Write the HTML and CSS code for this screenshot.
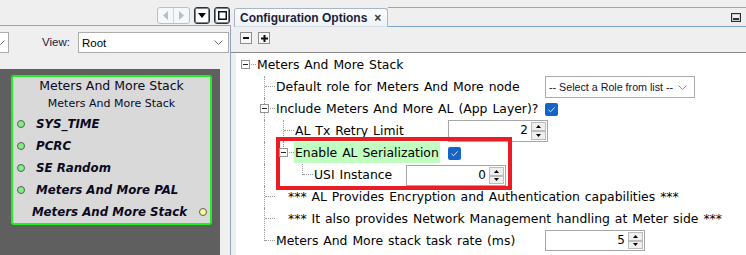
FILE: index.html
```html
<!DOCTYPE html>
<html lang="en">
<head>
  <meta charset="UTF-8">
  <title>Configuration Options</title>
  <link rel="stylesheet" href="styles.css">
</head>
<body>
<div class="app">

  <!-- Project graph panel -->
  <section class="left">
    <div class="left-head">
      <div class="nav-arrows">
        <span class="arr"><svg width="5" height="9" viewBox="0 0 5 9"><path d="M5 0 L0 4.5 L5 9 Z" fill="#b7bec6"/></svg></span>
        <span class="arr"><svg width="5" height="9" viewBox="0 0 5 9"><path d="M0 0 L5 4.5 L0 9 Z" fill="#b7bec6"/></svg></span>
      </div>
      <span class="win-btn"><svg width="8" height="5" viewBox="0 0 8 5"><path d="M0 0 H8 L4 5 Z" fill="#000"/></svg></span>
      <span class="win-btn"><svg width="9" height="9" viewBox="0 0 9 9"><rect x="0.75" y="0.75" width="7.5" height="7.5" fill="none" stroke="#111" stroke-width="1.5"/></svg></span>
    </div>
    <div class="left-body">
      <div class="view-bar">
        <div class="combo combo-stub">
          <svg width="9" height="5" viewBox="0 0 9 5"><path d="M0.5 0.5 L4.5 4.5 L8.5 0.5" fill="none" stroke="#707070"/></svg>
        </div>
        <span class="view-label">View:</span>
        <div class="combo combo-view">
          <span>Root</span>
          <svg width="9" height="5" viewBox="0 0 9 5"><path d="M0.5 0.5 L4.5 4.5 L8.5 0.5" fill="none" stroke="#707070"/></svg>
        </div>
      </div>
      <div class="canvas-wrap">
        <div class="canvas">
          <div class="node">
            <div class="node-title">Meters And More Stack</div>
            <div class="node-sub">Meters And More Stack</div>
            <div class="dep"><span class="dot green"></span>SYS_TIME</div>
            <div class="dep"><span class="dot green"></span>PCRC</div>
            <div class="dep"><span class="dot green"></span>SE Random</div>
            <div class="dep"><span class="dot green"></span>Meters And More PAL</div>
            <div class="dep cap">Meters And More Stack<span class="dot yellow"></span></div>
          </div>
        </div>
        <div class="gutter"></div>
      </div>
    </div>
  </section>

  <!-- Configuration options panel -->
  <section class="right">
    <div class="tabs">
      <div class="tab">Configuration Options <span class="tab-close">&times;</span></div>
      <div class="tab-rest"><span class="min-btn"></span></div>
    </div>
    <div class="tree-tools">
      <span class="tool-btn"><svg width="6" height="2" viewBox="0 0 6 2"><rect width="6" height="2" fill="#111"/></svg></span>
      <span class="tool-btn"><svg width="7" height="7" viewBox="0 0 7 7"><rect y="2.5" width="7" height="2" fill="#111"/><rect x="2.5" width="2" height="7" fill="#111"/></svg></span>
    </div>

    <div class="tree">
      <div class="row">
        <span class="cell h"><span class="exp"></span></span>
        <span class="label">Meters And More Stack</span>
      </div>

      <div class="row">
        <span class="cell"></span>
        <span class="cell v h"></span>
        <span class="label lbl-l">Default role for Meters And More node</span>
        <div class="combo combo-role">
          <span>-- Select a Role from list --</span>
          <svg width="9" height="5" viewBox="0 0 9 5"><path d="M0.5 0.5 L4.5 4.5 L8.5 0.5" fill="none" stroke="#8a8a8a"/></svg>
        </div>
      </div>

      <div class="row">
        <span class="cell"></span>
        <span class="cell v h"><span class="exp"></span></span>
        <span class="label lbl-l">Include Meters And More AL (App Layer)?</span>
        <svg class="check" width="13" height="13" viewBox="0 0 13 13"><rect width="13" height="13" rx="2" fill="#1565c8"/><path d="M3.5 6.8 L5.6 8.8 L9.6 4.4" fill="none" stroke="#d6e6fa" stroke-width="1"/></svg>
      </div>

      <div class="row">
        <span class="cell"></span>
        <span class="cell v"></span>
        <span class="cell v h"></span>
        <span class="label lbl-m">AL Tx Retry Limit</span>
        <div class="spinner">
          <span class="val">2</span>
          <span class="spin-btns">
            <span><svg width="5" height="3" viewBox="0 0 5 3"><path d="M0 3 L2.5 0 L5 3 Z" fill="#000"/></svg></span>
            <span><svg width="5" height="3" viewBox="0 0 5 3"><path d="M0 0 L5 0 L2.5 3 Z" fill="#000"/></svg></span>
          </span>
        </div>
      </div>

      <div class="row">
        <span class="cell"></span>
        <span class="cell v"></span>
        <span class="cell l h"><span class="exp"></span></span>
        <span class="label lbl-m"><span class="hl">Enable AL Serialization</span></span>
        <svg class="check" width="13" height="13" viewBox="0 0 13 13"><rect width="13" height="13" rx="2" fill="#1565c8"/><path d="M3.5 6.8 L5.6 8.8 L9.6 4.4" fill="none" stroke="#d6e6fa" stroke-width="1"/></svg>
      </div>

      <div class="row">
        <span class="cell"></span>
        <span class="cell v"></span>
        <span class="cell"></span>
        <span class="cell l h"></span>
        <span class="label lbl-s">USI Instance</span>
        <div class="spinner short">
          <span class="val">0</span>
          <span class="spin-btns">
            <span><svg width="5" height="3" viewBox="0 0 5 3"><path d="M0 3 L2.5 0 L5 3 Z" fill="#000"/></svg></span>
            <span><svg width="5" height="3" viewBox="0 0 5 3"><path d="M0 0 L5 0 L2.5 3 Z" fill="#000"/></svg></span>
          </span>
        </div>
      </div>

      <div class="row">
        <span class="cell"></span>
        <span class="cell v h"></span>
        <span class="label note">*** AL Provides Encryption and Authentication capabilities ***</span>
      </div>

      <div class="row">
        <span class="cell"></span>
        <span class="cell v h"></span>
        <span class="label note">*** It also provides Network Management handling at Meter side ***</span>
      </div>

      <div class="row">
        <span class="cell"></span>
        <span class="cell l h"></span>
        <span class="label lbl-l">Meters And More stack task rate (ms)</span>
        <div class="spinner flat">
          <span class="val">5</span>
          <span class="spin-btns">
            <span><svg width="5" height="3" viewBox="0 0 5 3"><path d="M0 3 L2.5 0 L5 3 Z" fill="#000"/></svg></span>
            <span><svg width="5" height="3" viewBox="0 0 5 3"><path d="M0 0 L5 0 L2.5 3 Z" fill="#000"/></svg></span>
          </span>
        </div>
      </div>

      <!-- annotation frame -->
      <div class="mark-box"></div>
    </div>
  </section>

</div>
</body>
</html>
```

FILE: styles.css
```css
* {
  box-sizing: border-box;
}

html, body {
  margin: 0;
  padding: 0;
}

body {
  width: 746px;
  height: 255px;
  overflow: hidden;
  background: #efefef;
  font-family: "DejaVu Sans", sans-serif;
  font-size: 12px;
  color: #000;
}

.app {
  display: flex;
  height: 255px;
}

svg {
  display: block;
}

/* Left panel */
.left {
  width: 231px;
  flex: none;
  display: flex;
  flex-direction: column;
}

.left-head {
  height: 25px;
  display: flex;
  justify-content: flex-end;
  align-items: flex-start;
  gap: 4px;
  padding: 7px 1px 0 0;
}

.nav-arrows {
  width: 33px;
  height: 17px;
  border: 1px solid #b3c0cd;
  border-radius: 3px;
  background: #f6f7f9;
  display: flex;
}

.nav-arrows .arr {
  flex: 1;
  display: flex;
  align-items: center;
  justify-content: center;
}

.nav-arrows .arr + .arr {
  border-left: 1px solid #cdd5dd;
}

.win-btn {
  width: 16px;
  height: 17px;
  border: 1px solid #2b3036;
  box-shadow: inset 0 0 0 1px #7a838c;
  border-radius: 3px;
  background: #fff;
  display: flex;
  align-items: center;
  justify-content: center;
}

.left-body {
  flex: 1;
  display: flex;
  flex-direction: column;
  border-top: 1px solid #8fa4b8;
  border-right: 1px solid #8fa4b8;
}

.view-bar {
  height: 43px;
  display: flex;
  align-items: flex-start;
  padding-top: 6px;
  font-family: "Liberation Sans", sans-serif;
  font-size: 11.5px;
}

.combo {
  height: 21px;
  border: 1px solid #acacac;
  background: #fff;
  display: flex;
  align-items: center;
}

.combo-stub {
  width: 9px;
  border-left: none;
  justify-content: flex-end;
  overflow: hidden;
  padding-right: 3px;
}

.combo-stub svg {
  flex: none;
}

.view-label {
  margin-left: 33px;
  line-height: 21px;
  color: #1a1a3a;
}

.combo-view {
  width: 151px;
  margin-left: auto;
  margin-right: 1px;
  justify-content: space-between;
  padding: 0 5px 0 3px;
}

.canvas-wrap {
  flex: 1;
  display: flex;
}

.canvas {
  width: 220px;
  background: #5f5f5f;
  padding: 6px 0 0 11px;
}

.gutter {
  flex: 1;
  background: #efefef;
}

.node {
  width: 201px;
  height: 150px;
  background: #d9d9d9;
  border: 2px solid #22ee22;
  border-radius: 3px;
  color: #0a0a1e;
}

.node-title {
  text-align: center;
  font-size: 12.5px;
  line-height: 17px;
}

.node-sub {
  text-align: center;
  font-size: 11px;
  line-height: 19px;
}

.dep {
  display: flex;
  align-items: center;
  gap: 11px;
  height: 22px;
  padding-left: 4px;
  font-weight: bold;
  font-style: italic;
  font-size: 11.8px;
}

.dep.cap {
  justify-content: flex-end;
  gap: 12px;
  padding-right: 3px;
}

.dot {
  width: 8px;
  height: 8px;
  border-radius: 50%;
  border: 1px solid #55605a;
  flex: none;
}

.dot.green {
  background: #80f080;
}

.dot.yellow {
  background: #fff890;
}

/* Right panel */
.right {
  flex: 1;
  display: flex;
  flex-direction: column;
}

.tabs {
  height: 27px;
  display: flex;
  align-items: flex-end;
  padding-left: 3px;
}

.tab {
  height: 19px;
  display: flex;
  align-items: center;
  gap: 7px;
  padding: 0 6px 0 5px;
  border: 1px solid #a9b6c4;
  border-bottom-color: #d3dde7;
  border-radius: 3px 3px 0 0;
  background: linear-gradient(#fbfcfe, #eef3f8);
  font-family: "Liberation Sans", sans-serif;
  font-weight: bold;
  font-size: 12px;
  color: #1c1c38;
}

.tab-close {
  font-size: 12px;
  color: #333;
}

.tab-rest {
  flex: 1;
  height: 20px;
  border-top: 1px solid #9aa6b1;
  border-bottom: 1px solid #7ea5ca;
  display: flex;
  justify-content: flex-end;
  align-items: center;
  padding-right: 5px;
}

.min-btn {
  width: 10px;
  height: 9px;
  border: 1px solid #2b2b2b;
  box-shadow: inset 0 0 0 1px #d0d0d0;
  background: linear-gradient(transparent 4px, #333 4px, #333 6px, transparent 6px);
}

.tree-tools {
  height: 26px;
  display: flex;
  align-items: flex-start;
  gap: 6px;
  padding: 5px 0 0 9px;
  border-bottom: 1px solid #8b8b8b;
}

.tool-btn {
  width: 12px;
  height: 12px;
  border: 1px solid #8e8e8e;
  background: #f7f7f7;
  display: flex;
  align-items: center;
  justify-content: center;
}

/* Tree */
.tree {
  flex: 1;
  position: relative;
  margin-left: 5px;
  padding-top: 1px;
  background: #fff;
  font-size: 12.4px;
  word-spacing: 1px;
}

.row {
  display: flex;
  align-items: flex-start;
  height: 22px;
}

.cell {
  position: relative;
  width: 19px;
  height: 22px;
  flex: none;
}

.cell.v::before,
.cell.l::before {
  content: "";
  position: absolute;
  left: 9px;
  top: 0;
  height: 22px;
  border-left: 1px dotted #9a9a9a;
}

.cell.l::before {
  height: 11px;
}

.cell.h::after {
  content: "";
  position: absolute;
  left: 10px;
  width: 10px;
  top: 10px;
  border-top: 1px dotted #9a9a9a;
}

.exp {
  position: absolute;
  left: 5px;
  top: 6px;
  width: 9px;
  height: 9px;
  border: 1px solid #949494;
  background: #fff;
  z-index: 1;
}

.exp::after {
  content: "";
  position: absolute;
  left: 1px;
  top: 3px;
  width: 5px;
  height: 1px;
  background: #222;
}

.label {
  padding-left: 2px;
  line-height: 22px;
  white-space: nowrap;
  flex: none;
}

.label.note {
  padding-left: 14px;
}

.lbl-l {
  width: 271px;
}

.lbl-m {
  width: 155px;
}

.lbl-s {
  width: 94px;
}

.hl {
  display: inline-block;
  background: #c0ffc0;
  line-height: 21px;
  margin-left: -1px;
  padding: 0 1px;
}

.combo-role {
  width: 150px;
  height: 22px;
  justify-content: space-between;
  padding: 0 7px 0 3px;
  font-family: "Liberation Sans", sans-serif;
  font-size: 10.7px;
  word-spacing: 0;
  white-space: nowrap;
  color: #10103c;
}

.combo-role svg {
  flex: none;
}

.check {
  margin-top: 5px;
}

.spinner {
  width: 100px;
  height: 22px;
  border: 1px solid #a6a6a6;
  background: #fff;
  display: flex;
  font-size: 12px;
}

.spinner.short {
  height: 21px;
  margin-top: 1px;
}

.spinner.flat {
  height: 21px;
}

.spinner .val {
  flex: 1;
  text-align: right;
  padding-right: 3px;
  line-height: 19px;
}

.spin-btns {
  width: 16px;
  display: flex;
  flex-direction: column;
  padding: 1px 1px 1px 0;
}

.spin-btns span {
  flex: 1;
  border: 1px solid #bcbcbc;
  background: #efefef;
  display: flex;
  align-items: center;
  justify-content: center;
}

.mark-box {
  position: absolute;
  left: 40px;
  top: 84px;
  width: 236px;
  height: 53px;
  border: 4px solid #ec1c24;
}
```
